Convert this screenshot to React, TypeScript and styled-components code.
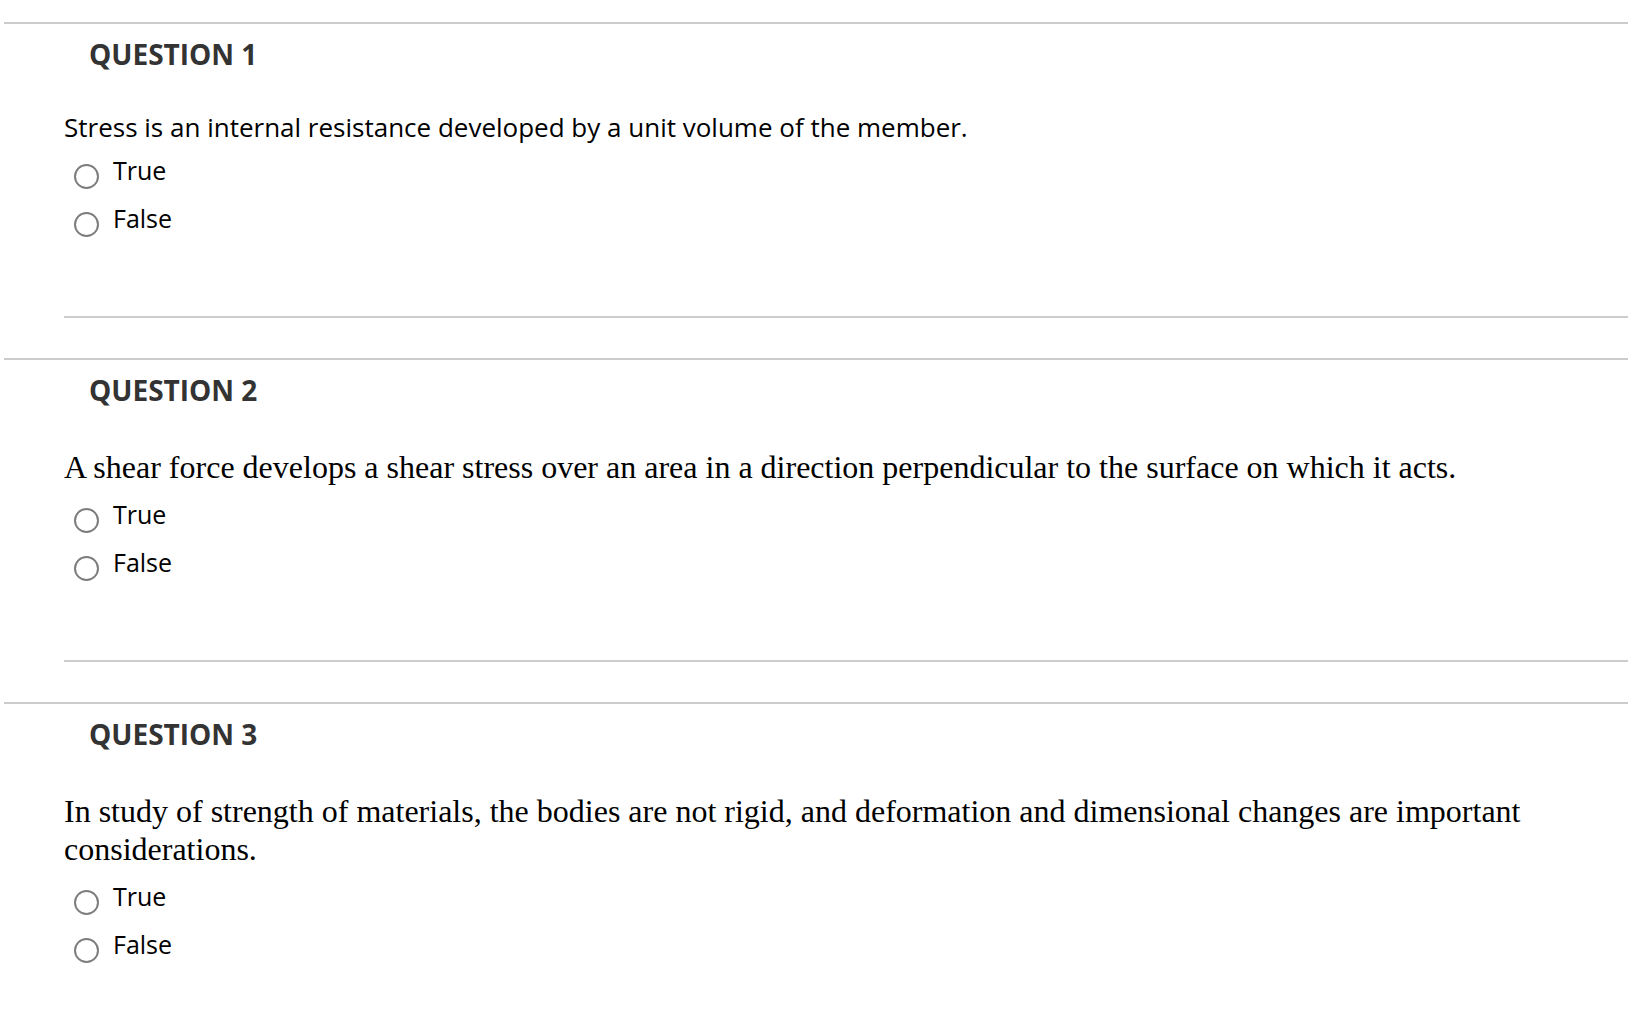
import React from 'react';
import styled, { createGlobalStyle } from 'styled-components';

const GlobalStyle = createGlobalStyle`
  html, body {
    margin: 0;
    padding: 0;
    background: #ffffff;
  }
  body {
    font-family: 'Open Sans', 'Liberation Sans', sans-serif;
    color: #000;
  }
`;

const Page = styled.div`
  padding: 22px 0 40px 4px;
`;

const QuestionBlock = styled.section`
  border-top: 2px solid #cccccc;
`;

const QuestionHeading = styled.h2`
  margin: 0;
  padding: 12px 0 0 85px;
  font-family: 'Open Sans', sans-serif;
  font-size: 28px;
  line-height: 36px;
  font-weight: 700;
  color: #333333;
`;

const QuestionBody = styled.div<{ $last?: boolean }>`
  margin-left: 60px;
  padding-top: 38px;
  padding-bottom: ${p => (p.$last ? '0' : '67px')};
  border-bottom: ${p => (p.$last ? 'none' : '2px solid #cccccc')};
  margin-bottom: ${p => (p.$last ? '0' : '40px')};
`;

const Prompt = styled.p<{ $serif?: boolean }>`
  margin: ${p => (p.$serif ? '2px 0 11px 0' : '0 0 9px 0')};
  font-family: ${p => (p.$serif ? "'Liberation Serif', 'Times New Roman', serif" : "'Open Sans', sans-serif")};
  font-size: ${p => (p.$serif ? '32px' : '26px')};
  line-height: ${p => (p.$serif ? '38px' : '34px')};
  color: #000;
`;

const OptionList = styled.div`
  display: flex;
  flex-direction: column;
`;

const OptionRow = styled.label`
  display: flex;
  align-items: flex-start;
  gap: 14px;
  height: 48px;
  cursor: pointer;
`;

const Radio = styled.span`
  box-sizing: border-box;
  flex-shrink: 0;
  width: 25px;
  height: 25px;
  margin: 11px 0 0 10px;
  border: 2px solid #7d7d7d;
  border-radius: 50%;
  background: #fff;
`;

const OptionText = styled.span`
  font-family: 'Open Sans', sans-serif;
  font-size: 25px;
  line-height: 34px;
  color: #000;
`;

const questions = [
  { n: 1, text: 'Stress is an internal resistance developed by a unit volume of the member.', serif: false },
  {
    n: 2,
    text: 'A shear force develops a shear stress over an area in a direction perpendicular to the surface on which it acts.',
    serif: true,
  },
  {
    n: 3,
    text: 'In study of strength of materials, the bodies are not rigid, and deformation and dimensional changes are important considerations.',
    serif: true,
  },
];

const App: React.FC = () => {
  return (
    <>
      <GlobalStyle />
      <Page>
        {questions.map((q, i) => (
          <QuestionBlock key={q.n}>
            <QuestionHeading>QUESTION {q.n}</QuestionHeading>
            <QuestionBody $last={i === questions.length - 1}>
              <Prompt $serif={q.serif}>{q.text}</Prompt>
              <OptionList>
                {['True', 'False'].map(opt => (
                  <OptionRow key={opt}>
                    <Radio />
                    <OptionText>{opt}</OptionText>
                  </OptionRow>
                ))}
              </OptionList>
            </QuestionBody>
          </QuestionBlock>
        ))}
      </Page>
    </>
  );
};

export default App;
